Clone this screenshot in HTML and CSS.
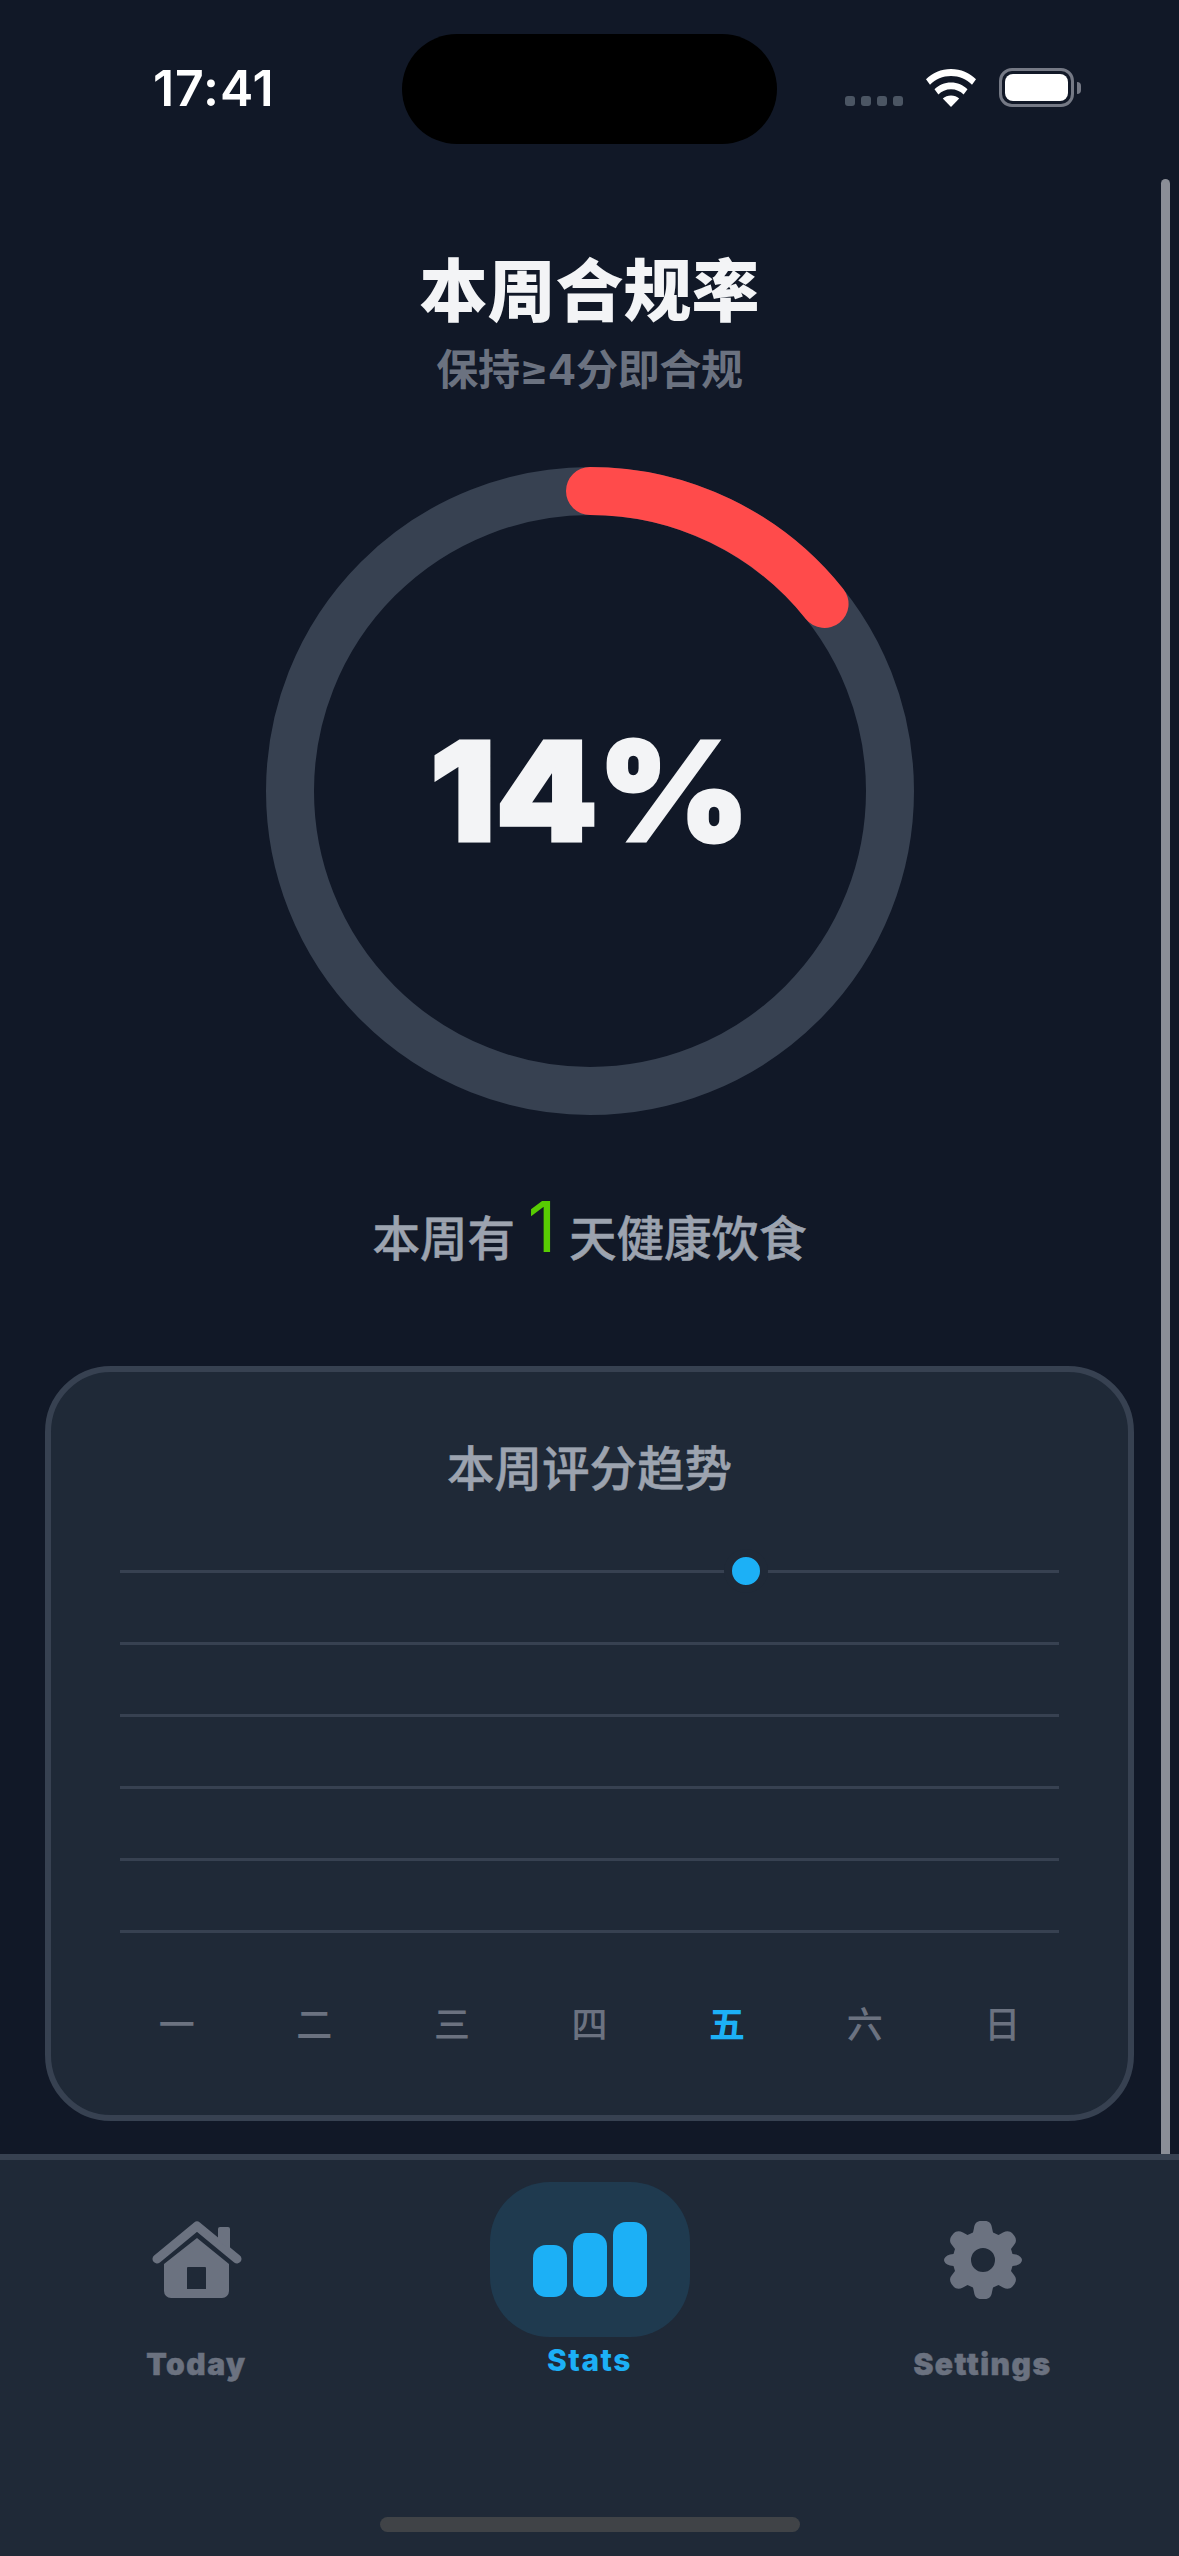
FILE: index.html
```html
<!DOCTYPE html>
<html lang="zh">
<head>
<meta charset="utf-8">
<title>Stats</title>
<link rel="stylesheet" href="styles.css">
</head>
<body>
<div class="app">
  <div class="island"></div>
  <div class="scrollbar"></div>
  <header class="status">
    <span class="time">17:41</span>
    <div class="status-icons">
      <div class="signal"><i></i><i></i><i></i><i></i></div>
      <svg class="wifi" width="52" height="38" viewBox="0 0 52 38">
        <path fill="#fff" d="M26 0C16 0 7.500 3.800 1 10.200L5 15.800C10.500 10.300 17.800 7 26 7S41.500 10.300 47 15.800L51 10.200C44.500 3.800 36 0 26 0Z"/>
        <path fill="#fff" d="M26 13.500C19.500 13.500 13.800 16 9.500 20.200L13.400 25.400C16.600 22.300 21 20.300 26 20.300S35.400 22.300 38.600 25.400L42.500 20.200C38.200 16 32.500 13.500 26 13.500Z"/>
        <path fill="#fff" d="M26 26.500C22.800 26.500 20 27.600 17.800 29.500L26 38L34.200 29.500C32 27.600 29.200 26.500 26 26.500Z"/>
      </svg>
      <div class="battery"><div class="battery-fill"></div></div>
      <div class="battery-nub"></div>
    </div>
  </header>

  <main class="content">
    <h1 class="title">本周合规率</h1>
    <p class="subtitle">保持≥4分即合规</p>

    <div class="ring">
      <svg width="648" height="648" viewBox="0 0 648 648">
        <circle cx="324" cy="324" r="300" fill="none" stroke="#374151" stroke-width="48"/>
        <circle class="ring-value" cx="324" cy="324" r="300" fill="none" stroke="#ff4b4b" stroke-width="48" stroke-linecap="round" pathLength="700" stroke-dasharray="100 600" transform="rotate(-90 324 324)"/>
      </svg>
      <span class="percent">14%</span>
    </div>

    <p class="summary">本周有 <span class="count">1</span> 天健康饮食</p>

    <section class="card">
      <h2 class="card-title">本周评分趋势</h2>
      <div class="chart">
        <div class="line"></div>
        <div class="line"></div>
        <div class="line"></div>
        <div class="line"></div>
        <div class="line"></div>
        <div class="line"></div>
        <div class="dot"></div>
      </div>
      <div class="days">
        <span>一</span><span>二</span><span>三</span><span>四</span><span class="today">五</span><span>六</span><span>日</span>
      </div>
    </section>
  </main>

  <nav class="tabs">
    <div class="tab">
      <svg class="tab-icon" width="90" height="80" viewBox="0 0 90 80">
        <path fill="#6b7280" fill-rule="evenodd" d="M45 18 77 44V71a7 7 0 0 1-7 7H19a7 7 0 0 1-7-7V44ZM36 47a1 1 0 0 0-1 1V69H54V48a1 1 0 0 0-1-1Z"/>
        <path fill="none" stroke="#6b7280" stroke-width="9" stroke-linecap="round" stroke-linejoin="round" d="M5 39 45 6 85 39"/>
        <path fill="#6b7280" d="M66 9a2 2 0 0 1 2-2h8a2 2 0 0 1 2 2V30L66 20Z"/>
      </svg>
      <span class="tab-label">Today</span>
    </div>
    <div class="tab tab-active">
      <div class="pill">
        <i class="bar bar-1"></i><i class="bar bar-2"></i><i class="bar bar-3"></i>
      </div>
      <span class="tab-label">Stats</span>
    </div>
    <div class="tab">
      <svg class="tab-icon" width="78" height="80" viewBox="-39 -40 78 80">
        <path fill="#6b7280" fill-rule="evenodd" d="M-9 -32C-8.500 -36.500 -6 -39 -2 -39H2C6 -39 8.500 -36.500 9 -32L10 -27.500 15.500 -25 20 -27.500C24 -29.500 27 -29 29.500 -26.500L31.500 -24C33.500 -21 33.500 -18 31 -15L28 -11 29.500 -6 33 -5.500C37 -4.500 39 -2 39 0S37 4.500 33 5.500L29.500 6 28 11 31 15C33.500 18 33.500 21 31.500 24L29.500 26.500C27 29 24 29.500 20 27.500L15.500 25 10 27.500 9 32C8.500 36.500 6 39 2 39H-2C-6 39 -8.500 36.500 -9 32L-10 27.500 -15.500 25 -20 27.500C-24 29.500 -27 29 -29.500 26.500L-31.500 24C-33.500 21 -33.500 18 -31 15L-28 11 -29.500 6 -33 5.500C-37 4.500 -39 2 -39 0S-37 -4.500 -33 -5.500L-29.500 -6 -28 -11 -31 -15C-33.500 -18 -33.500 -21 -31.500 -24L-29.500 -26.500C-27 -29 -24 -29.500 -20 -27.500L-15.500 -25 -10 -27.500ZM0 -12A12 12 0 1 0 0 12 12 12 0 1 0 0 -12Z"/>
      </svg>
      <span class="tab-label">Settings</span>
    </div>
    <div class="home-indicator"></div>
  </nav>
</div>
</body>
</html>
```
FILE: styles.css
```css
* { box-sizing: border-box; }
html, body { margin: 0; padding: 0; background: #111827; }
body { font-family: Inter, "Noto Sans CJK SC", sans-serif; }
.app {
  position: relative;
  width: 1179px;
  height: 2556px;
  overflow: hidden;
  display: flex;
  flex-direction: column;
  background: #111827;
}
.island {
  position: absolute;
  left: 402px;
  top: 34px;
  width: 375px;
  height: 110px;
  border-radius: 55px;
  background: #000;
}
.scrollbar {
  position: absolute;
  left: 1161px;
  top: 179px;
  width: 9px;
  height: 1975px;
  border-radius: 5px 5px 0 0;
  background: #8b8e97;
}
.status {
  height: 240px;
  flex: none;
  display: flex;
  justify-content: space-between;
  align-items: flex-start;
  padding: 58px 98px 0 153px;
}
.time {
  font-size: 50px;
  line-height: 60px;
  font-weight: 600;
  color: #fff;
  letter-spacing: 0.9px;
}
.status-icons {
  display: flex;
  align-items: flex-start;
  padding-top: 10px;
}
.signal {
  display: flex;
  gap: 6px;
  margin: 28px 22px 0 0;
}
.signal i {
  width: 10px;
  height: 10px;
  border-radius: 3px;
  background: #4b5563;
}
.wifi { margin-top: 1px; margin-right: 22px; }
.battery {
  width: 75px;
  height: 39px;
  border: 3px solid #757985;
  border-radius: 13px;
  padding: 3px;
}
.battery-fill { width: 100%; height: 100%; background: #fff; border-radius: 8px; }
.battery-nub {
  width: 4px;
  height: 12px;
  margin: 14px 0 0 3px;
  background: #757985;
  border-radius: 0 6px 6px 0;
}
.content {
  flex: 1;
  min-height: 0;
  display: flex;
  flex-direction: column;
  align-items: center;
}
.title {
  margin: 9px 0 0;
  font-size: 68px;
  line-height: 84px;
  font-weight: 900;
  color: #f3f4f6;
}
.subtitle {
  margin: 10px 0 0;
  font-size: 42px;
  line-height: 54px;
  font-weight: 700;
  letter-spacing: -0.3px;
  color: #6b7280;
}
.ring {
  margin: 70px 0 0 1px;
  width: 648px;
  height: 648px;
  display: grid;
  place-items: center;
}
.ring svg, .percent { grid-area: 1 / 1; }
.ring svg { display: block; }
.percent {
  font-size: 138px;
  line-height: 1;
  font-weight: 900;
  -webkit-text-stroke: 3px #f3f4f6;
  color: #f3f4f6;
  transform: scaleX(1.055);
}
.summary {
  margin: 74px 0 0;
  font-size: 47.500px;
  line-height: 84px;
  height: 84px;
  font-weight: 500;
  -webkit-text-stroke: 0.5px #9ca3af;
  color: #9ca3af;
}
.count {
  font-size: 70px;
  font-weight: 400;
  -webkit-text-stroke: 0;
  color: #58cc02;
  position: relative;
  top: -4px;
}
.card {
  margin-top: 93px;
  width: 1089px;
  height: 755px;
  align-self: flex-start;
  margin-left: 45px;
  padding: 0 69px;
  border: 6px solid #374151;
  border-radius: 66px;
  background: #1f2937;
}
.card-title {
  margin: 67px 0 0;
  text-align: center;
  font-size: 47.500px;
  line-height: 60px;
  font-weight: 500;
  -webkit-text-stroke: 0.5px #9ca3af;
  color: #9ca3af;
}
.chart {
  position: relative;
  margin-top: 71px;
  display: flex;
  flex-direction: column;
  gap: 69px;
}
.line { height: 3px; background: #374151; }
.dot {
  position: absolute;
  left: 604px;
  top: -21px;
  width: 44px;
  height: 44px;
  border: 8px solid #1f2937;
  border-radius: 50%;
  background: #1cb0f6;
}
.days {
  margin: 70px -8px 0;
  display: grid;
  grid-template-columns: repeat(7, 137.600px);
  justify-content: center;
  text-align: center;
  font-size: 36px;
  line-height: 44px;
  font-weight: 500;
  color: #6b7280;
}
.today { color: #1cb0f6; font-weight: 700; }
.tabs {
  position: relative;
  flex: none;
  height: 402px;
  border-top: 6px solid #374151;
  background: #1f2937;
  display: grid;
  grid-template-columns: 393px 393px 393px;
  align-items: start;
}
.tab {
  display: flex;
  flex-direction: column;
  align-items: center;
  padding-top: 60px;
}
.tab-icon { display: block; }
.tab-label {
  margin-top: 46px;
  font-size: 30px;
  line-height: 36px;
  font-weight: 900;
  letter-spacing: 1.500px;
  -webkit-text-stroke: 0.5px currentColor;
  color: #6b7280;
}
.tab-active { padding-top: 22px; }
.tab-active .tab-label { margin-top: 5px; color: #1cb0f6; -webkit-text-stroke: 0; font-weight: 800; }
.pill {
  width: 200px;
  height: 155px;
  border-radius: 60px;
  background: #1f3a4f;
  display: flex;
  justify-content: center;
  align-items: flex-end;
  gap: 6px;
  padding-bottom: 40px;
}
.bar { width: 34px; border-radius: 13px; background: #1cb0f6; }
.bar-1 { height: 52px; }
.bar-2 { height: 64px; }
.bar-3 { height: 75px; }
.home-indicator {
  position: absolute;
  left: 380px;
  bottom: 24px;
  width: 420px;
  height: 15px;
  border-radius: 8px;
  background: #404347;
}
```
